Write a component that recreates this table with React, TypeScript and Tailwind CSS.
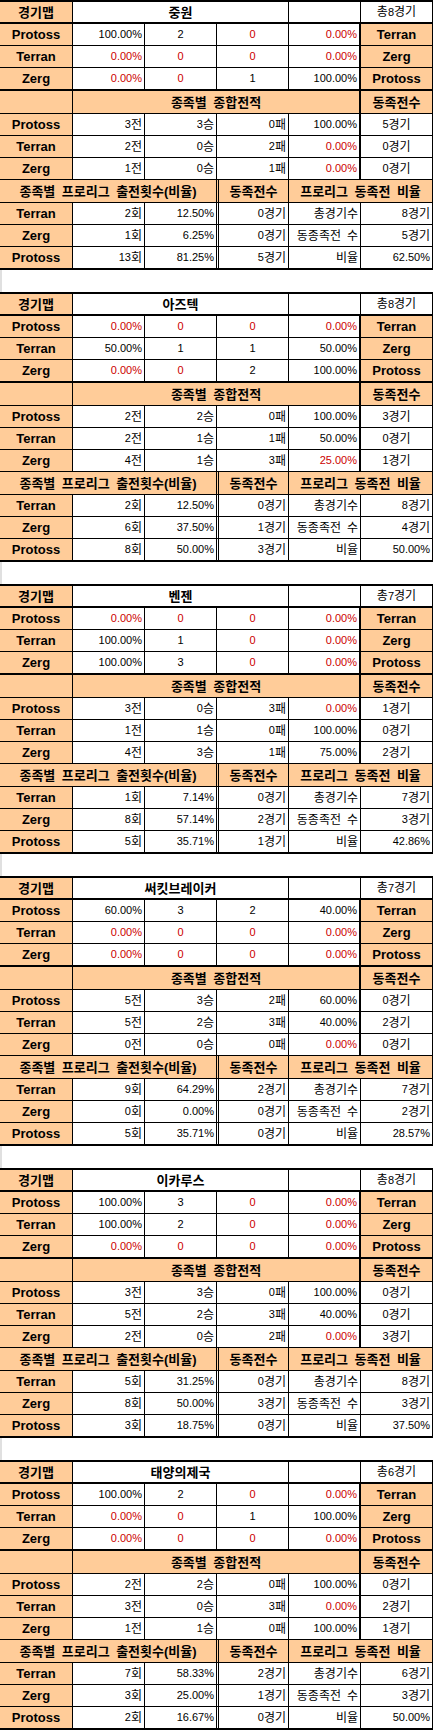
import React from 'react';

type Block = {
  map: string;
  total: string;
  vs: string[][];
  race: string[][];
  pro: string[][];
};

// "!" 로 시작하면 빨간 글씨
const blocks: Block[] = [
  {
    map: '중원', total: '총8경기',
    vs: [
      ['Protoss', '100.00%', '2', '!0', '!0.00%', 'Terran'],
      ['Terran', '!0.00%', '!0', '!0', '!0.00%', 'Zerg'],
      ['Zerg', '!0.00%', '!0', '1', '100.00%', 'Protoss'],
    ],
    race: [
      ['Protoss', '3전', '3승', '0패', '100.00%', '5경기'],
      ['Terran', '2전', '0승', '2패', '!0.00%', '0경기'],
      ['Zerg', '1전', '0승', '1패', '!0.00%', '0경기'],
    ],
    pro: [
      ['Terran', '2회', '12.50%', '0경기', '8경기'],
      ['Zerg', '1회', '6.25%', '0경기', '5경기'],
      ['Protoss', '13회', '81.25%', '5경기', '62.50%'],
    ],
  },
  {
    map: '아즈텍', total: '총8경기',
    vs: [
      ['Protoss', '!0.00%', '!0', '!0', '!0.00%', 'Terran'],
      ['Terran', '50.00%', '1', '1', '50.00%', 'Zerg'],
      ['Zerg', '!0.00%', '!0', '2', '100.00%', 'Protoss'],
    ],
    race: [
      ['Protoss', '2전', '2승', '0패', '100.00%', '3경기'],
      ['Terran', '2전', '1승', '1패', '50.00%', '0경기'],
      ['Zerg', '4전', '1승', '3패', '!25.00%', '1경기'],
    ],
    pro: [
      ['Terran', '2회', '12.50%', '0경기', '8경기'],
      ['Zerg', '6회', '37.50%', '1경기', '4경기'],
      ['Protoss', '8회', '50.00%', '3경기', '50.00%'],
    ],
  },
  {
    map: '벤젠', total: '총7경기',
    vs: [
      ['Protoss', '!0.00%', '!0', '!0', '!0.00%', 'Terran'],
      ['Terran', '100.00%', '1', '!0', '!0.00%', 'Zerg'],
      ['Zerg', '100.00%', '3', '!0', '!0.00%', 'Protoss'],
    ],
    race: [
      ['Protoss', '3전', '0승', '3패', '!0.00%', '1경기'],
      ['Terran', '1전', '1승', '0패', '100.00%', '0경기'],
      ['Zerg', '4전', '3승', '1패', '75.00%', '2경기'],
    ],
    pro: [
      ['Terran', '1회', '7.14%', '0경기', '7경기'],
      ['Zerg', '8회', '57.14%', '2경기', '3경기'],
      ['Protoss', '5회', '35.71%', '1경기', '42.86%'],
    ],
  },
  {
    map: '써킷브레이커', total: '총7경기',
    vs: [
      ['Protoss', '60.00%', '3', '2', '40.00%', 'Terran'],
      ['Terran', '!0.00%', '!0', '!0', '!0.00%', 'Zerg'],
      ['Zerg', '!0.00%', '!0', '!0', '!0.00%', 'Protoss'],
    ],
    race: [
      ['Protoss', '5전', '3승', '2패', '60.00%', '0경기'],
      ['Terran', '5전', '2승', '3패', '40.00%', '2경기'],
      ['Zerg', '0전', '0승', '0패', '!0.00%', '0경기'],
    ],
    pro: [
      ['Terran', '9회', '64.29%', '2경기', '7경기'],
      ['Zerg', '0회', '0.00%', '0경기', '2경기'],
      ['Protoss', '5회', '35.71%', '0경기', '28.57%'],
    ],
  },
  {
    map: '이카루스', total: '총8경기',
    vs: [
      ['Protoss', '100.00%', '3', '!0', '!0.00%', 'Terran'],
      ['Terran', '100.00%', '2', '!0', '!0.00%', 'Zerg'],
      ['Zerg', '!0.00%', '!0', '!0', '!0.00%', 'Protoss'],
    ],
    race: [
      ['Protoss', '3전', '3승', '0패', '100.00%', '0경기'],
      ['Terran', '5전', '2승', '3패', '40.00%', '0경기'],
      ['Zerg', '2전', '0승', '2패', '!0.00%', '3경기'],
    ],
    pro: [
      ['Terran', '5회', '31.25%', '0경기', '8경기'],
      ['Zerg', '8회', '50.00%', '3경기', '3경기'],
      ['Protoss', '3회', '18.75%', '0경기', '37.50%'],
    ],
  },
  {
    map: '태양의제국', total: '총6경기',
    vs: [
      ['Protoss', '100.00%', '2', '!0', '!0.00%', 'Terran'],
      ['Terran', '!0.00%', '!0', '1', '100.00%', 'Zerg'],
      ['Zerg', '!0.00%', '!0', '!0', '!0.00%', 'Protoss'],
    ],
    race: [
      ['Protoss', '2전', '2승', '0패', '100.00%', '0경기'],
      ['Terran', '3전', '0승', '3패', '!0.00%', '2경기'],
      ['Zerg', '1전', '1승', '0패', '100.00%', '1경기'],
    ],
    pro: [
      ['Terran', '7회', '58.33%', '2경기', '6경기'],
      ['Zerg', '3회', '25.00%', '1경기', '3경기'],
      ['Protoss', '2회', '16.67%', '0경기', '50.00%'],
    ],
  },
];

const proLabels = ['총경기수', '동종족전\u2002수', '비율'];

// 한글은 12px, 숫자는 11px
const Txt = ({ s }: { s: string }) => {
  const parts = s.split(/([\uAC00-\uD7A3\u2002]+)/);
  return (
    <>
      {parts.map((p, i) =>
        p ? (
          /[\uAC00-\uD7A3]/.test(p) ? (
            <span key={i} className="text-[12px]">{p}</span>
          ) : (
            <span key={i}>{p}</span>
          )
        ) : null
      )}
    </>
  );
};

const Cell = ({
  v = '',
  w,
  align = 'right',
  head = false,
  border = 'border-r',
}: {
  v?: string;
  w: string;
  align?: 'left' | 'center' | 'right';
  head?: boolean;
  border?: string;
}) => {
  const red = v.startsWith('!');
  const text = red ? v.slice(1) : v;
  const justify = align === 'right' ? 'justify-end pr-[2px]' : align === 'center' ? 'justify-center' : 'justify-start pl-[3px]';
  return (
    <div
      className={`${w} h-full shrink-0 flex items-center ${justify} ${border} border-black whitespace-nowrap ${
        head ? 'bg-[#ffcc99] font-bold text-[13px] text-black' : 'bg-white text-[11px]'
      } ${red ? 'text-[#cc0000]' : 'text-black'}`}
    >
      {head ? text : <Txt s={text} />}
    </div>
  );
};

const Row = ({ h, b, children }: { h: string; b: string; children: React.ReactNode }) => (
  <div className={`flex ${h} ${b} border-black`}>{children}</div>
);

const MapBlock = ({ d }: { d: Block }) => (
  <div className="border-t-2 border-black w-[433px]">
    <Row h="h-[22px]" b="border-b-2">
      <Cell v="경기맵" w="w-[73px]" align="center" head />
      <Cell v={d.map} w="w-[216px]" align="center" head border="border-r !bg-white" />
      <Cell w="w-[72px]" />
      <Cell v={d.total} w="w-[72px]" align="center" />
    </Row>
    {d.vs.map((r, i) => (
      <Row key={i} h={i === 2 ? 'h-[23px]' : 'h-[22px]'} b={i === 2 ? 'border-b-2' : 'border-b'}>
        <Cell v={r[0]} w="w-[73px]" align="center" head />
        <Cell v={r[1]} w="w-[72px]" />
        <Cell v={r[2]} w="w-[72px]" align="center" />
        <Cell v={r[3]} w="w-[72px]" align="center" />
        <Cell v={r[4]} w="w-[72px]" border="border-r-2" />
        <Cell v={r[5]} w="w-[72px]" align="center" head />
      </Row>
    ))}
    <Row h="h-[23px]" b="border-b">
      <Cell w="w-[73px]" head />
      <Cell v={'종족별\u2002종합전적'} w="w-[288px]" align="center" head border="border-r-2" />
      <Cell v="동족전수" w="w-[72px]" align="center" head />
    </Row>
    {d.race.map((r, i) => (
      <Row key={i} h="h-[22px]" b="border-b">
        <Cell v={r[0]} w="w-[73px]" align="center" head />
        <Cell v={r[1]} w="w-[72px]" />
        <Cell v={r[2]} w="w-[72px]" />
        <Cell v={r[3]} w="w-[72px]" />
        <Cell v={r[4]} w="w-[72px]" border="border-r-2" />
        <Cell v={r[5]} w="w-[72px]" align="center" />
      </Row>
    ))}
    <Row h="h-[23px]" b="border-b">
      <Cell v={'종족별\u2002프로리그\u2002출전횟수(비율)'} w="w-[219px]" align="center" head border="border-r-[3px] border-double" />
      <Cell v="동족전수" w="w-[70px]" align="center" head />
      <Cell v={'프로리그\u2002동족전\u2002비율'} w="w-[144px]" align="center" head />
    </Row>
    {d.pro.map((r, i) => (
      <Row key={i} h={i === 2 ? 'h-[23px]' : 'h-[22px]'} b={i === 2 ? 'border-b-2' : 'border-b'}>
        <Cell v={r[0]} w="w-[73px]" align="center" head />
        <Cell v={r[1]} w="w-[72px]" />
        <Cell v={r[2]} w="w-[74px]" border="border-r-[3px] border-double" />
        <Cell v={r[3]} w="w-[70px]" />
        <Cell v={proLabels[i]} w="w-[72px]" />
        <Cell v={r[4]} w="w-[72px]" />
      </Row>
    ))}
  </div>
);

export default function App() {
  return (
    <div className="w-[433px] bg-white font-['Liberation_Sans','Noto_Sans_CJK_KR',sans-serif] leading-none">
      {blocks.map((b, i) => (
        <div key={i}>
          <MapBlock d={b} />
          {i < blocks.length - 1 && <div className="h-[22px] border-l-2 border-[#e0e0e0]" />}
        </div>
      ))}
    </div>
  );
}
